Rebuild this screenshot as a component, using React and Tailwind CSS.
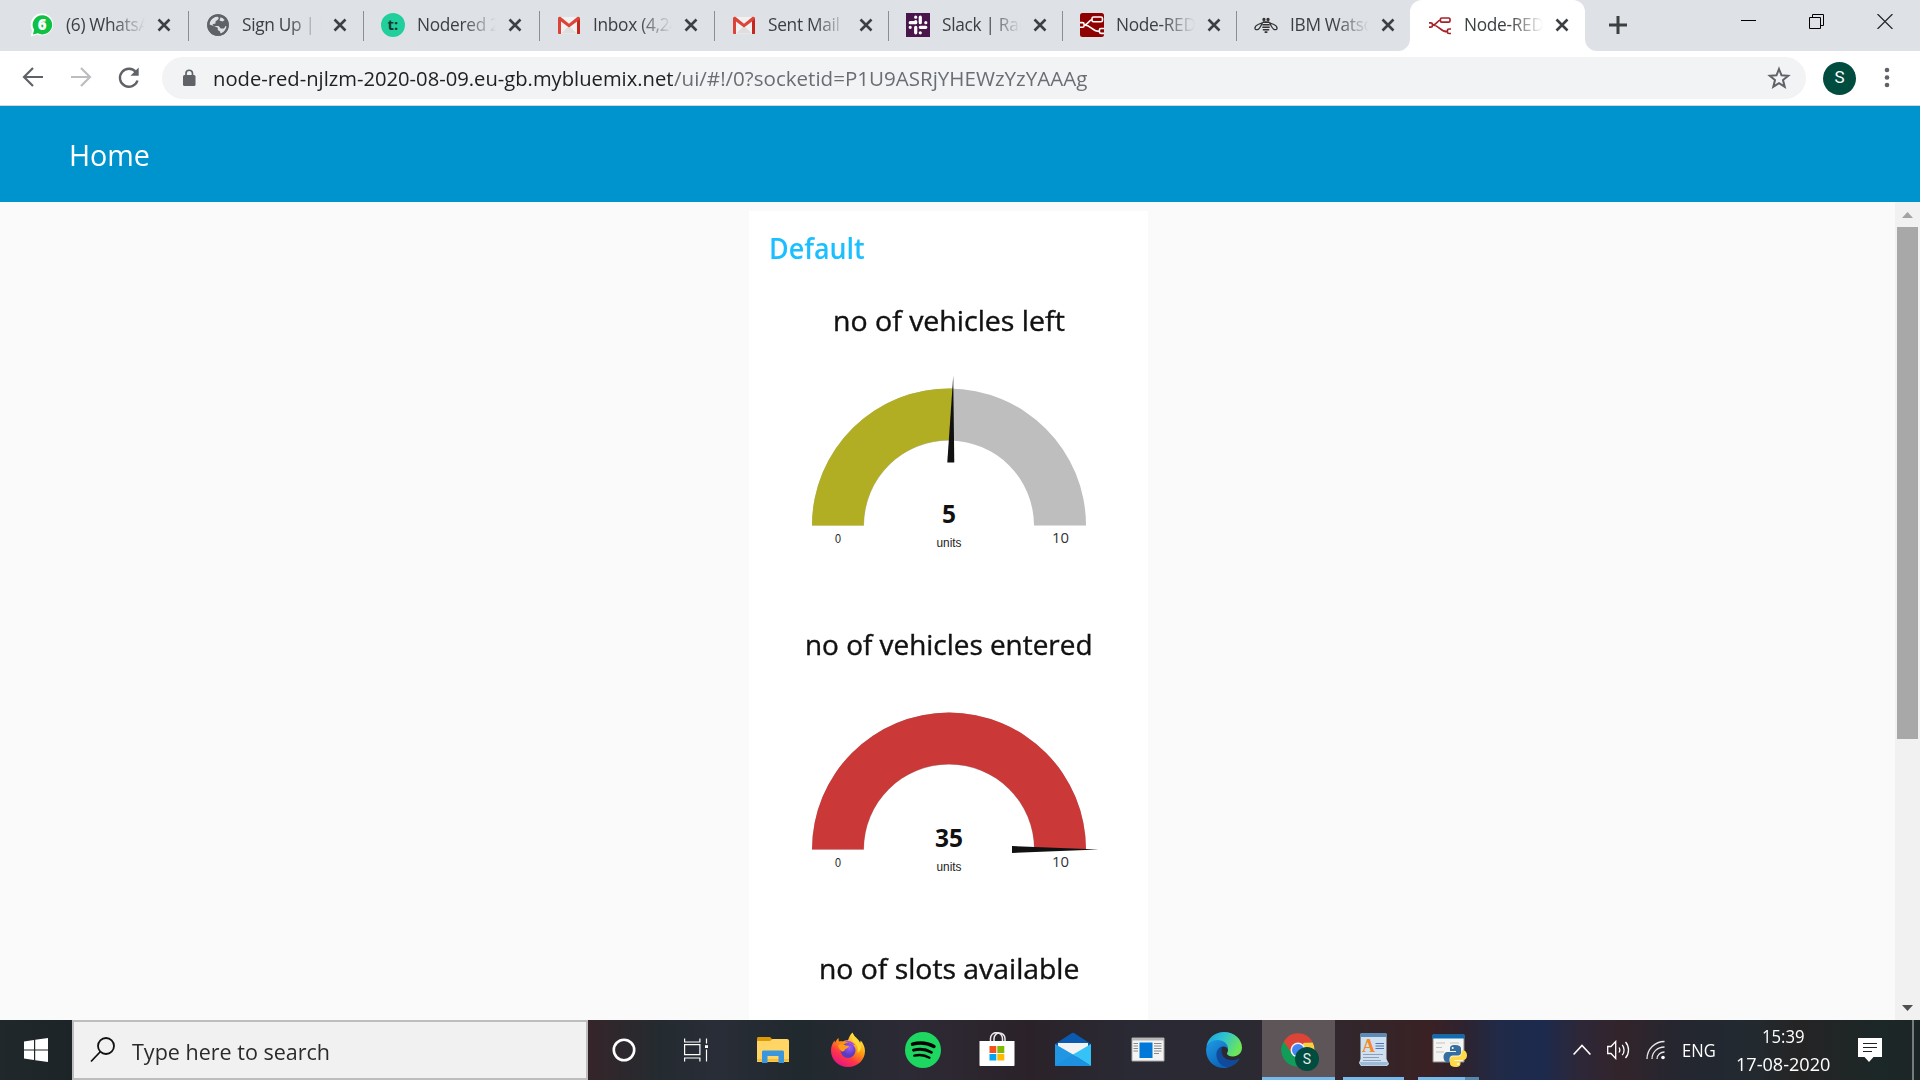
import React, { useLayoutEffect, useRef, useState } from "react";

const SANS = "font-['Open_Sans',sans-serif]";

// Single-line text squeezed or stretched to an exact width.
function Fit({ w, className = "", children }) {
  const ref = useRef(null);
  const [scale, setScale] = useState(1);
  useLayoutEffect(() => {
    const measure = () => {
      if (ref.current) setScale(w / ref.current.offsetWidth);
    };
    measure();
    document.fonts?.ready.then(measure);
  }, [w]);
  return (
    <span className={"block shrink-0 whitespace-nowrap " + className} style={{ width: w }}>
      <span ref={ref} className="inline-block origin-left" style={{ transform: `scaleX(${scale})` }}>
        {children}
      </span>
    </span>
  );
}

/* ---------- tab icons ---------- */

const WhatsAppIcon = () => (
  <svg width="24" height="24" viewBox="0 0 24 24">
    <path d="M12.5.5a11 11 0 1 1-5 21L.8 23.4l1.4-6.2A11.2 11.2 0 0 1 12.5.5Z" fill="#fff" />
    <path d="M12.5 2.2a9.6 9.6 0 1 1-4.6 18L3 21.4l1.1-4.6A9.6 9.6 0 0 1 12.5 2.2Z" fill="#0fc143" />
    <text x="12.2" y="17.3" textAnchor="middle" fontSize="15" fontWeight="800" fill="#fff" fontFamily="Open Sans">6</text>
  </svg>
);

const GlobeIcon = () => (
  <svg width="24" height="24" viewBox="0 0 24 24">
    <circle cx="12" cy="12" r="10.8" fill="#5f6368" />
    <path d="M11 3.500c2 .5 2 2 1 3L9.500 8.500v2l-3 .8 1.200 1.700h5l2 2.500h3.300l1.500-2.500 1.300.6c-.5 3.500-3 6.400-6.300 7.200l-.5-2.300-2.200-1.500v-2.200L8 13 3.500 11.500C3.700 7.500 7 4 11 3.500Z" fill="#dee1e6" />
    <path d="M3 12.500 8.500 15l.3 2.500 2 1v2.300C6.500 20.500 3 16.800 3 12.500Z" fill="#5f6368" />
    <path d="M14.500 4.200c1.700.5 3.200 1.500 4.200 2.800l-2.200 1.500-3-1z" fill="#dee1e6" />
    <circle cx="12" cy="12" r="9.800" fill="none" stroke="#5f6368" strokeWidth="2" />
  </svg>
);

const TimerIcon = () => (
  <svg width="24" height="24" viewBox="0 0 24 24">
    <circle cx="12" cy="12" r="12" fill="#21cf9c" />
    <text x="12" y="17" textAnchor="middle" fontSize="15" fontWeight="700" fill="#123a33" fontFamily="Open Sans">t:</text>
  </svg>
);

const GmailIcon = () => (
  <svg width="24" height="24" viewBox="0 0 24 24">
    <path d="M2 4h20v17H2z" fill="#f1f1f1" />
    <path d="M4 20.500 12 13l8 7.500z" fill="#dedede" />
    <path d="M1 5.500C1 4 2.500 3.200 4 4.200l8 6.600 8-6.600c1.500-1 3-.2 3 1.300V20c0 .6-.5 1-1 1h-2V8.500l-8 6-8-6V21H2c-.5 0-1-.4-1-1z" fill="#dc4437" />
    <path d="M20 8.500 23 6v14c0 .6-.5 1-1 1h-2z" fill="#c5271c" />
  </svg>
);

const SlackIcon = () => (
  <svg width="24" height="24" viewBox="0 0 24 24">
    <path d="M0 0h24v24H0z" fill="#4a154b" />
    <g stroke="#fff" strokeWidth="3.200" strokeLinecap="round">
      <path d="M9.700 8.700v1M4.200 9.700h5.500M14.300 4.200v5.500M14.300 14.300h5.500M9.700 14.300v5.500" />
      <path d="M9.700 4.200h.01M19.800 9.700h.01M14.300 19.800h.01M4.200 14.300h.01" />
    </g>
  </svg>
);

const NodeGlyph = ({ stroke, fill }) => (
  <g stroke={stroke} strokeWidth="1.600" fill={fill}>
    <path d="M4 12c5 0 4-5.500 9-5.500M4 12c8 0 7 6.500 16 6.500" fill="none" />
    <rect x="12" y="4" width="10.500" height="4.800" rx="1.500" />
    <path d="M0 9.600h2.500c1 0 1.600.7 1.600 1.600v1.500c0 1-.6 1.600-1.600 1.600H0M24 15.500h-3c-1 0-1.600.7-1.600 1.500v1.800c0 1 .6 1.600 1.600 1.600h3" />
  </g>
);

const NodeRedIcon = () => (
  <svg width="24" height="24" viewBox="0 0 24 24">
    <rect width="24" height="24" rx="2.500" fill="#8f0000" />
    <NodeGlyph stroke="#fff" fill="#8f0000" />
  </svg>
);

// The glyph alone: dark red strokes with no badge behind them.
const NodeRedLineIcon = () => (
  <svg width="24" height="24" viewBox="0 0 24 24" fill="none" stroke="#a5232a" strokeWidth="1.700">
    <path d="M1 9.800h1.800c1 0 1.600.6 1.600 1.400v1.600c0 .8-.6 1.400-1.600 1.400H1M4.400 12c5.600 0 4-5 8.600-5M4.400 12c7.600 0 7 6.700 15 6.700" />
    <rect x="12.400" y="5" width="9.600" height="4.200" rx="1.300" />
    <path d="M23 16h-2c-1 0-1.600.6-1.600 1.400v1.700c0 .8.600 1.400 1.600 1.400h2" />
  </svg>
);

const BeeIcon = () => (
  <svg width="26" height="24" viewBox="0 0 26 24" fill="none" stroke="#333" strokeWidth="1.400">
    <circle cx="10.800" cy="6" r="1.100" fill="#333" />
    <circle cx="15.200" cy="6" r="1.100" fill="#333" />
    <path d="M9.500 8.900h7M9 11.700h8M9 14.500h8M9.500 17.200h7M11.500 19.700h3" strokeWidth="1.700" />
    <path d="M9 9.800 5 11.200C2.500 12.200 1 14 1 15.500s2 2 3.500 1.200S7.500 13 9 9.800ZM17 9.800l4 1.400c2.500 1 4 2.800 4 4.300s-2 2-3.500 1.200-3-3.700-4.500-6.900Z" />
  </svg>
);

const CloseX = () => (
  <svg width="14" height="14" viewBox="0 0 14 14" className="shrink-0">
    <path d="m1.500 1.500 11 11m0-11-11 11" stroke="#3c4043" strokeWidth="2.600" />
  </svg>
);

const TABS = [
  { title: "(6) WhatsApp", icon: <WhatsAppIcon />, width: "w-[162px]" },
  { title: "Sign Up | IBM", icon: <GlobeIcon />, width: "w-[175px]" },
  { title: "Nodered 2020", icon: <TimerIcon />, width: "w-[176px]" },
  { title: "Inbox (4,243)", icon: <GmailIcon />, width: "w-[175px]" },
  { title: "Sent Mail", icon: <GmailIcon />, width: "w-[174px]" },
  { title: "Slack | Rams", icon: <SlackIcon />, width: "w-[174px]" },
  { title: "Node-RED :", icon: <NodeRedIcon />, width: "w-[174px]" },
  { title: "IBM Watson", icon: <BeeIcon />, width: "w-[173px]", last: true },
];

function TabBody({ icon, title }) {
  return (
    <>
      <span className="flex w-6 shrink-0 justify-center">{icon}</span>
      <span
        className={`ml-3 w-[79px] shrink-0 overflow-hidden whitespace-nowrap text-[17.3px] leading-[26px] tracking-[-0.3px] text-[#3c4043] [mask-image:linear-gradient(to_right,black_58%,transparent_100%)] ${SANS}`}
      >
        {title}
      </span>
      <span className="ml-[12px] flex">
        <CloseX />
      </span>
    </>
  );
}

function TabStrip() {
  return (
    <div className="flex h-[51px] bg-[#dee1e6] pl-[27px]">
      {TABS.map((t, i) => (
        <div key={i} className={`relative flex h-[50px] shrink-0 items-center ${t.width} ${i === 0 ? "pl-[3px]" : "pl-[17px]"}`}>
          <TabBody {...t} />
          {!t.last && <span className="absolute right-0 top-[11px] h-[30px] w-[1.500px] bg-[#8b8f94]" />}
        </div>
      ))}
      <div className="relative flex h-[51px] w-[175px] shrink-0 items-center rounded-t-[12px] bg-white pb-px pl-[18px]">
        <svg className="absolute -left-3 bottom-0" width="12" height="12"><path d="M12 0v12H0A12 12 0 0 0 12 0Z" fill="#fff" /></svg>
        <TabBody icon={<NodeRedLineIcon />} title="Node-RED D" />
        <svg className="absolute -right-3 bottom-0" width="12" height="12"><path d="M0 0v12h12A12 12 0 0 1 0 0Z" fill="#fff" /></svg>
      </div>
      <svg className="ml-[24px] mt-4" width="18" height="18"><path d="M9 0v18M0 9h18" stroke="#3c4043" strokeWidth="3" /></svg>
      <div className="ml-auto mr-[27px] mt-[14px] flex gap-[53px]">
        <svg width="15" height="15"><path d="M0 6.500h15" stroke="#000" /></svg>
        <svg width="15" height="15" fill="none" stroke="#000"><path d="M.5 3.500h11v11H.5zM3.500 3.500v-3h11v11h-3" /></svg>
        <svg width="16" height="15" stroke="#222" strokeWidth="1.200"><path d="m.5 0 15 15M15.500 0 .5 15" /></svg>
      </div>
    </div>
  );
}

function Toolbar() {
  return (
    <div className="flex h-[55px] items-center border-b border-[#d5d7da] bg-white pl-[22px]">
      <svg width="22" height="22" fill="none" stroke="#5f6368" strokeWidth="2.200"><path d="M21 10H2.500M11 1 2 10l9 9" /></svg>
      <svg className="ml-[26px]" width="22" height="22" fill="none" stroke="#bbbdc0" strokeWidth="2.200"><path d="M1 10h18.500M11 1l9 9-9 9" /></svg>
      <svg className="ml-[25px]" width="24" height="24" fill="none" stroke="#5f6368" strokeWidth="2.400"><path d="M20.500 14.500A9 9 0 1 1 19 6.200" /><path d="M21.700 1.500v8.200h-8.200z" fill="#5f6368" stroke="none" /></svg>
      <div className="ml-[21px] flex h-[42px] w-[1644px] items-center rounded-full bg-[#f1f3f4] pl-[20px] pr-[15px]">
        <svg width="14" height="18" viewBox="0 0 14 18"><rect x="1" y="6" width="12.500" height="11" rx="1.500" fill="#5f6368" /><path d="M4 7V4.500a3.200 3.200 0 0 1 6.500 0V7" fill="none" stroke="#5f6368" strokeWidth="1.700" /></svg>
        <Fit w={461} className={`ml-[17px] text-[20.500px] leading-[30px] text-[#202124] ${SANS}`}>node-red-njlzm-2020-08-09.eu-gb.mybluemix.net</Fit>
        <Fit w={413} className={`text-[20.500px] leading-[30px] text-[#6a6e73] ${SANS}`}>/ui/#!/0?socketid=P1U9ASRjYHEWzYzYAAAg</Fit>
        <svg className="ml-auto" width="24" height="24" viewBox="0 0 24 24" fill="none" stroke="#5f6368" strokeWidth="2"><path d="m12 3 2.500 6.300 6.700.5-5.200 4.300 1.700 6.600L12 17.100l-5.700 3.600L8 14.100 2.800 9.800l6.700-.5z" /></svg>
      </div>
      <div className="ml-[17px] flex h-[33px] w-[33px] items-center justify-center rounded-full bg-[#004d40] text-[17px] text-white font-[Roboto,sans-serif]">S</div>
      <svg className="ml-[28px]" width="6" height="22" fill="#5f6368"><circle cx="3" cy="3" r="2.300" /><circle cx="3" cy="10.500" r="2.300" /><circle cx="3" cy="18" r="2.300" /></svg>
    </div>
  );
}

/* ---------- gauges ---------- */

const GAUGE_TITLE = "text-[28px] leading-10 text-[#111] [-webkit-text-stroke:0.4px_#111] font-['Open_Sans',sans-serif]";

function Gauge({ title, titleWidth, value, fraction, color }) {
  const angle = Math.PI * (1 - fraction);
  const px = (r) => 200 + r * Math.cos(angle);
  const py = (r) => 216.5 - r * Math.sin(angle);
  return (
    <div className="flex h-[324px] flex-col items-center">
      <Fit w={titleWidth} className={GAUGE_TITLE}>{title}</Fit>
      <svg className="-mt-[31px]" width="400" height="284" viewBox="0 0 400 284">
        <path d="M63 216.500a137 137 0 0 1 274 0h-52a85 85 0 0 0-170 0z" fill="#bebebe" />
        <path d={`M63 216.500A137 137 0 0 1 ${px(137)} ${py(137)}L${px(85.3)} ${py(85.3)}A85.300 85.300 0 0 0 114.700 216.500z`} fill={color} />
        <g transform={`rotate(${fraction * 180 - 90} 200 216.500)`}>
          <path d="M196.500 153.500h7L200 67z" fill="#111" />
        </g>
        <text x="200" y="213.500" textAnchor="middle" fontFamily="Open Sans" fontWeight="700" fontSize="24.500" fill="#111">{value}</text>
        <text x="89" y="233.500" textAnchor="middle" fontFamily="Liberation Sans" fontSize="12" textLength="6" lengthAdjust="spacingAndGlyphs" fill="#222">0</text>
        <text x="200" y="238" textAnchor="middle" fontFamily="Liberation Sans" fontSize="12" textLength="25" lengthAdjust="spacingAndGlyphs" fill="#222">units</text>
        <text x="311.500" y="234" textAnchor="middle" fontFamily="Open Sans" fontSize="15" textLength="17" lengthAdjust="spacingAndGlyphs" fill="#333">10</text>
      </svg>
    </div>
  );
}

function Dashboard() {
  return (
    <div className="flex h-[914px] flex-col overflow-hidden bg-[#fafafa]">
      <header className="flex h-24 shrink-0 items-center bg-[#0094ce] pl-[69px]">
        <Fit w={81} className={`pt-0.5 text-[29px] leading-10 text-white ${SANS}`}>Home</Fit>
      </header>
      <div className="flex h-[818px]">
        <div className="flex flex-1 pl-[749px] pt-[9px]">
          <section className="h-[809px] w-[399px] overflow-hidden bg-white">
            <h2 className="pl-5 pt-[17px]">
              <Fit w={96} className={`text-[28px] font-semibold leading-10 text-[#1bbfff] ${SANS}`}>Default</Fit>
            </h2>
            <div className="mt-8 flex flex-col">
              <Gauge title="no of vehicles left" titleWidth={232} value="5" fraction={0.509} color="#b2ae23" />
              <Gauge title="no of vehicles entered" titleWidth={288} value="35" fraction={1} color="#ca3838" />
              <div className="flex justify-center">
                <Fit w={260} className={GAUGE_TITLE}>no of slots available</Fit>
              </div>
            </div>
          </section>
        </div>
        <div className="flex w-[25px] flex-col items-center bg-[#f1f1f1]">
          <svg width="25" height="25"><path d="M7 16h11l-5.500-6z" fill="#a3a3a3" /></svg>
          <div className="h-[512px] w-[21px] bg-[#a8a8a8]" />
          <svg className="mt-auto" width="25" height="25"><path d="M7 10h11l-5.500 6z" fill="#505050" /></svg>
        </div>
      </div>
    </div>
  );
}

/* ---------- taskbar ---------- */

const FolderIcon = () => (
  <svg width="36" height="36" viewBox="0 0 36 36">
    <path d="M2 6.500C2 5.600 2.600 5 3.500 5H15l2.500 2.500L15 10H2z" fill="#dc9a09" />
    <path d="M2 9h13l2.500-2H32c1.200 0 2 .8 2 2v21H2z" fill="#ffd665" />
    <path d="M2 27h32v2.500H2z" fill="#f6be3f" />
    <path d="M7 31V20c0-1 .7-1.500 1.500-1.500h19c.9 0 1.500.6 1.500 1.500v11h-5.500v-7h-11v7z" fill="#3a96dd" />
  </svg>
);

const FirefoxIcon = () => (
  <svg width="36" height="36" viewBox="0 0 36 36">
    <defs>
      <linearGradient id="ffBody" x1=".85" y1=".1" x2=".3" y2="1"><stop offset="0" stopColor="#fff14a" /><stop offset=".4" stopColor="#ff980e" /><stop offset=".7" stopColor="#ff3647" /><stop offset="1" stopColor="#e31587" /></linearGradient>
      <radialGradient id="ffCore" cx=".6" cy=".3"><stop offset="0" stopColor="#9f5cff" /><stop offset="1" stopColor="#5b3bc0" /></radialGradient>
    </defs>
    <path d="M22.500.5c1 3 3 4.500 5 6.500 1.500 1.500 2.200 2.700 2.500 4l.8-2.500C33 11 35 15 35 19c0 9-7.500 16-17 16S1 28 1 18.500c0-4 1.300-7 3.500-10l.5 2.500c.7-2 2-4 3.500-5l.3 3.500c1.500-.5 3-.5 4.200 0 1.700-1 3-1.200 5-1.200 1-3 2-5.500 4.500-7.800Z" fill="url(#ffBody)" />
    <path d="M23 2c-1.500 2.500-1.700 5 .5 8 4 2.500 5 6.500 4 11 3-2 4-5 3.500-8-1.500-4-6-6-8-11Z" fill="#ffd93b" />
    <circle cx="18" cy="18.500" r="7.500" fill="url(#ffCore)" />
    <path d="M8 14c2-2.500 4-2.500 7-.8l4 .8c0 2-3 2.300-4 3.500-.5 2-2.500 2-3.500 2-1.500-2-3-3.500-3.500-5.500Z" fill="#ff9a1a" />
    <path d="M14 10c4-2.500 9-.5 11 3l-3-.5c-2-2-5-2-8-2.500Z" fill="#a545ee" />
  </svg>
);

const SpotifyIcon = () => (
  <svg width="36" height="36" viewBox="0 0 36 36">
    <circle cx="18" cy="18" r="18" fill="#1ed760" />
    <g fill="none" stroke="#000" strokeLinecap="round">
      <path d="M7.500 12.200c7-2 15-1.300 21.500 2.300" strokeWidth="3.400" />
      <path d="M8.500 18.200c6-1.700 12.500-1 18 2.200" strokeWidth="2.800" />
      <path d="M9.300 23.700c5.200-1.300 10.500-.8 15.200 2" strokeWidth="2.300" />
    </g>
  </svg>
);

const StoreIcon = () => (
  <svg width="36" height="36" viewBox="0 0 36 36">
    <path d="M11.500 9V6.500a6 6 0 0 1 12 0V9M15 9V6.500a5.500 5.500 0 0 1 11 0V9" fill="none" stroke="#e8e8e8" strokeWidth="1.500" />
    <path d="M.5 9h35v24c0 .6-.4 1-1 1h-33c-.6 0-1-.4-1-1z" fill="#fff" />
    <path d="M10.500 14H17.300v7h-6.800z" fill="#f25022" /><path d="M18.300 14h7v7h-7z" fill="#7fba00" /><path d="M10.500 22H17.300v6.500h-6.800z" fill="#00a4ef" /><path d="M18.300 22h7v6.500h-7z" fill="#ffb900" />
  </svg>
);

const MailIcon = () => (
  <svg width="36" height="36" viewBox="0 0 36 36">
    <path d="M0 12 17 1c.6-.4 1.400-.4 2 0l17 11v8H0z" fill="#0a5ab0" />
    <path d="M3 11h30v8L18 26 3 19z" fill="#f3f3f3" />
    <path d="M0 12 18 22.500 36 34H1c-.6 0-1-.4-1-1z" fill="#2196e3" />
    <path d="M36 12 18 22.500 36 34z" fill="#35c3f7" />
    <path d="M0 34 18 22.500 36 34z" fill="#1d90e0" />
  </svg>
);

const NewsIcon = () => (
  <svg width="36" height="36" viewBox="0 0 36 36">
    <path d="M2 6h32v23H2z" fill="#f4f4f4" stroke="#a9a9a9" />
    <path d="M2 6h32v2.500H2z" fill="#b7b7b7" />
    <path d="M9.500 10.500h13V26h-13z" fill="#0078d7" />
    <path d="M3.500 11.500H8M3.500 14H8M3.500 16.500H8M3.500 19H8M24 11.500h7.500M24 14h7.500M24 16.500h7.500M24 19h7.500M24 21.500h5" stroke="#888" strokeWidth="1" />
  </svg>
);

const EdgeIcon = () => (
  <svg width="36" height="36" viewBox="0 0 36 36">
    <defs>
      <linearGradient id="eTop" x1="0" y1="0" x2="1" y2=".4"><stop offset="0" stopColor="#1b9de2" /><stop offset=".5" stopColor="#2fc3d0" /><stop offset="1" stopColor="#6ce55a" /></linearGradient>
      <linearGradient id="eLow" x1="0" y1="0" x2=".6" y2="1"><stop offset="0" stopColor="#1f9ce6" /><stop offset="1" stopColor="#0b64b8" /></linearGradient>
    </defs>
    <path d="M.3 15C1.500 6.500 8.500 0 18 0c10.500 0 18 7.500 18 15.500C36 21 32 24.500 27 24.500c-4 0-6-1.500-6-3 0-1 1-1.500 1-3.500 0-4-4-8-10-8C6 10 1.500 12 .3 15Z" fill="url(#eTop)" />
    <path d="M.2 16.500C1 11 6.500 8 11.500 8c6 0 10.500 3.500 10.500 9-1-1.500-2.500-2.500-4.500-2.500-4 0-6.500 4-6 9 .7 6 5 10.500 10.500 12-1.500.4-2.500.5-4 .5C7 36-.9 27 .2 16.500Z" fill="url(#eLow)" />
    <path d="M16.500 14.500c-4 1-6.500 4.500-6 9.500C11 30 16 35 22 35.500c5-1.200 9-4.300 11.300-8 .3-.7-.3-1-.9-.7-8 3.700-16.900 0-16.900-7.800 0-1.700.3-3.300 1-4.500Z" fill="#114a9b" />
  </svg>
);

const ChromeIcon = () => (
  <svg width="40" height="40" viewBox="0 0 40 40">
    <path d="M18 18 3.700 9.700A16.500 16.500 0 0 0 18 34.500Z" fill="#109d58" />
    <path d="M18 18V10.500h14.700A16.500 16.500 0 0 1 18 34.500Z" fill="#ffcd40" />
    <path d="M3.700 9.700 11.500 22 18 18l6-7.500 8.700-.5A16.500 16.500 0 0 0 3.700 9.700Z" fill="#db4437" />
    <path d="M3.700 9.700A16.500 16.500 0 0 0 18 34.500l5-10-11-2.500z" fill="#109d58" />
    <circle cx="18" cy="18" r="7.500" fill="#f1f1f1" />
    <circle cx="18" cy="18" r="6" fill="#4285f4" />
    <circle cx="27" cy="27" r="12" fill="#004d40" />
    <text x="27" y="32" textAnchor="middle" fontFamily="Roboto" fontSize="14" fill="#e5eeec">S</text>
  </svg>
);

const WordPadIcon = () => (
  <svg width="36" height="36" viewBox="0 0 36 36">
    <path d="M4.500 2h26v25l2.500 5-2 2H5l-2-3 1.500-4z" fill="#cfe0f0" />
    <path d="M4.500 1h26v4h-26z" fill="#5d8bb5" />
    <path d="M3.500 30h29l-2 3.500H5.500z" fill="#9dbad6" />
    <text x="12.500" y="20" textAnchor="middle" fontFamily="Liberation Serif" fontWeight="700" fontSize="18" fill="#f58a2a">A</text>
    <path d="M19.500 11.500H28M19.500 14H28M19.500 16.500H28" stroke="#4c72b8" strokeWidth="1.200" />
    <path d="M7 22.500h20M7 25.500h16M7 28.500h18" stroke="#8d9fb8" strokeWidth="1" />
  </svg>
);

const PythonIcon = () => (
  <svg width="36" height="36" viewBox="0 0 36 36">
    <path d="M1 3h31v27H1z" fill="#f4f4f2" stroke="#888" />
    <path d="M.5 2.500h32v4H.5z" fill="#0b6cb8" />
    <path d="M4 11h9M4 15.500h6M4 20h8M18 11h9" stroke="#c2c2c2" strokeWidth="1.200" />
    <path d="M23 13c-4 0-5 1.500-5 3.500V19h6v1h-8.500c-2.500 0-4 2-4 5s1.500 5 3.500 5h2.500v-3c0-2 1.500-3.500 3.500-3.500h5c1.700 0 3-1.300 3-3v-4c0-2.300-2-3.500-6-3.500Z" fill="#366f9f" />
    <path d="M23.500 35c4 0 5-1.500 5-3.500V29h-6v-1h8.500c2.500 0 4-2 4-4.500 0-3-1.500-5-3.500-5h-2V21c0 2-1.500 3.500-3.500 3.500h-5c-1.700 0-3 1.300-3 3v4c0 2.300 2 3.500 5.500 3.500Z" fill="#ffd948" />
    <circle cx="20.700" cy="16" r="1" fill="#fff" /><circle cx="26" cy="32" r="1" fill="#fff" />
  </svg>
);

const Slot = ({ children, className }) => (
  <div className={"flex h-[60px] shrink-0 items-center justify-center " + className}>{children}</div>
);

function Taskbar() {
  return (
    <div className="flex h-[60px] bg-[linear-gradient(to_right,#20282b_0px,#1d2427_72px,#35252a_588px,#242b30_660px,#292d37_715px,#20292e_800px,#2d2a35_910px,#2b2229_1030px,#2a2a34_1130px,#2b2932_1250px,#33262b_1360px,#3a2124_1430px,#2d2330_1465px,#202a48_1500px,#1c2a4e_1540px,#2d2738_1580px,#33242b_1620px,#242630_1680px,#222a30_1750px,#252425_1800px,#1c2727_1880px,#1c2526_1920px)]">
      <div className="flex w-[72px] items-center justify-center">
        <svg width="24" height="24" fill="#fff"><path d="M0 3.400 10 2v9.400H0zM11.200 1.800 24 0v11.400H11.200zM0 12.600h10V22L0 20.600zM11.200 12.600H24V24l-12.800-1.800z" /></svg>
      </div>
      <div className="flex w-[516px] items-center border-2 border-[#bdbdbd] bg-[#f1f1f1] pl-4">
        <svg width="26" height="26" fill="none" stroke="#111" strokeWidth="1.800"><circle cx="16" cy="9" r="8" /><path d="M10.500 14.500 1 24.500" /></svg>
        <Fit w={198} className={`ml-4 pt-1 text-[22.500px] leading-8 text-[#2b2b2b] ${SANS}`}>Type here to search</Fit>
      </div>
      <Slot className="w-[72px]"><svg width="24" height="24"><circle cx="12" cy="12" r="10.200" fill="none" stroke="#fff" strokeWidth="2.600" /></svg></Slot>
      <Slot className="w-[72px]"><svg width="24" height="24" fill="none" stroke="#fff" strokeWidth="1.200"><path d="M.6.500V4h15.300V.5M.6 6.600h15.300v10H.6zM.6 23.500V20h15.300v3.500M22.500.5v5M22.500 11.500v12" /><path d="M21 7.200h3V10h-3z" fill="#fff" stroke="none" /></svg></Slot>
      <Slot className="w-[82px]"><FolderIcon /></Slot>
      <Slot className="w-[68px]"><FirefoxIcon /></Slot>
      <Slot className="w-[82px]"><SpotifyIcon /></Slot>
      <Slot className="w-[66px]"><StoreIcon /></Slot>
      <Slot className="w-[85px]"><MailIcon /></Slot>
      <Slot className="w-[66px]"><NewsIcon /></Slot>
      <Slot className="w-[81px] pl-1"><EdgeIcon /></Slot>
      <div className="flex w-[73px] shrink-0 flex-col items-center border-b-[3px] border-[#76b9ed] bg-[#5d5558] pl-[2px] pt-[12px]"><ChromeIcon /></div>
      <div className="ml-[8px] flex w-[61px] shrink-0 justify-center border-b-[3px] border-[#76b9ed] pt-[12px]"><WordPadIcon /></div>
      <div className="ml-[14px] flex w-[61px] shrink-0 flex-col justify-between pl-[14px] pt-[12px]">
        <PythonIcon />
        <div className="-ml-[14px] flex h-[3px]"><span className="w-[47px] bg-[#76b9ed]" /><span className="w-[14px] bg-[#5587ab]" /></div>
      </div>
      <div className="ml-[94px] flex items-center">
        <svg width="18" height="12" fill="none" stroke="#fff" strokeWidth="1.600"><path d="m.6 10.500 8.400-9 8.400 9" /></svg>
        <svg className="ml-4" width="23" height="20" fill="none" stroke="#fff" strokeWidth="1.300"><path d="M.7 6.500H4l4.700-5v17L4 13.500H.7zM12 7.500c1 1.500 1 3.500 0 5M15.200 4.800c2.500 3 2.500 7.400 0 10.400M18.500 2c4 4.500 4 11.500 0 16" /></svg>
        <svg className="ml-4" width="20" height="20" fill="none" stroke="#e8e8e8" strokeWidth="1.300"><path d="M1 19C1 9 9 1.500 18.500 1.500M6 19c0-7 5.500-12 12.500-12M11 19c0-4 3.500-7 7.500-7" /><circle cx="17" cy="17.500" r="1.800" fill="#fff" stroke="none" /></svg>
        <Fit w={34} className={`ml-[16px] text-[17.500px] leading-6 text-white ${SANS}`}>ENG</Fit>
      </div>
      <div className={`ml-[20px] flex w-[94px] flex-col items-center pt-[2px] text-[17.500px] leading-7 text-white ${SANS}`}>
        <Fit w={43}>15:39</Fit>
        <Fit w={94}>17-08-2020</Fit>
      </div>
      <svg className="ml-[28px] mt-[18px]" width="24" height="25"><path d="M0 0h24v19H15.500L11 24l-4.500-5H0z" fill="#fff" /><path d="M5 5.500h14M5 9.500h14M5 13.500h9" stroke="#222" strokeWidth="1.200" /></svg>
      <div className="ml-auto mr-[6px] w-[2px] bg-[#777b7c]" />
    </div>
  );
}

export default function App() {
  return (
    <div className="h-[1080px] w-[1920px] overflow-hidden bg-white">
      <TabStrip />
      <Toolbar />
      <Dashboard />
      <Taskbar />
    </div>
  );
}
